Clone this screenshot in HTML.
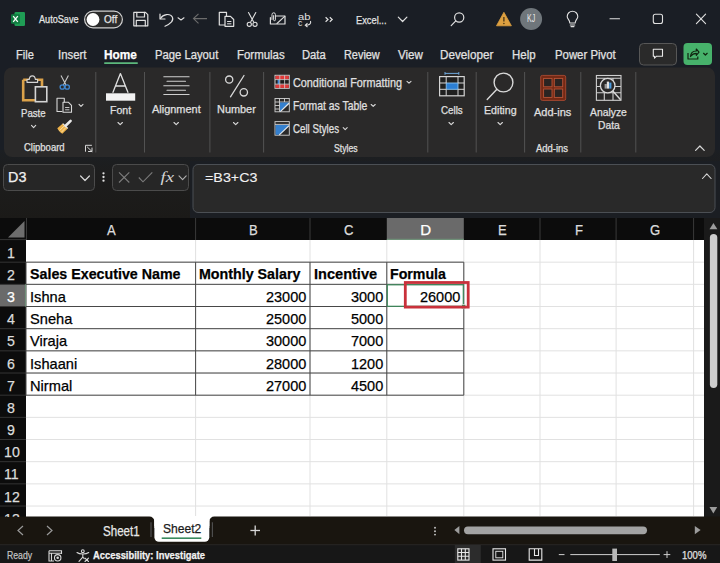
<!DOCTYPE html>
<html><head><meta charset="utf-8">
<style>
html,body{margin:0;padding:0;width:720px;height:563px;overflow:hidden;background:#1a1e25;}
body{position:relative;font-family:"Liberation Sans",sans-serif;}
svg.bg{position:absolute;left:0;top:0;width:720px;height:563px;}
.t{-webkit-text-stroke:0.25px currentColor;position:absolute;white-space:pre;line-height:1;transform-origin:0 0;font-family:"Liberation Sans",sans-serif;}
</style></head><body>
<svg class="bg" width="720" height="563" viewBox="0 0 720 563">
<!-- app bg -->
<defs><linearGradient id="fg" x1="0" y1="0" x2="0" y2="1"><stop offset="0" stop-color="#1c1f23"/><stop offset="0.35" stop-color="#1d1d1d"/><stop offset="1" stop-color="#1b1a18"/></linearGradient></defs>
<rect x="0" y="0" width="720" height="563" fill="#1a1e25"/>
<rect x="0" y="150" width="720" height="68" fill="url(#fg)"/>
<!-- ribbon -->
<rect x="4" y="67.5" width="711" height="89.5" rx="8" fill="#2a2929"/>
<!-- formula area -->
<rect x="3.5" y="164.5" width="91" height="26" rx="4" fill="#262626" stroke="#4b4b4b" stroke-width="1"/>
<g fill="#e0e0e0"><circle cx="103.5" cy="173.3" r="1.15"/><circle cx="103.5" cy="177" r="1.15"/><circle cx="103.5" cy="180.7" r="1.15"/></g>
<rect x="112.5" y="164.5" width="76" height="26" rx="4" fill="#262626" stroke="#4b4b4b" stroke-width="1"/>
<rect x="190" y="161" width="530" height="57" fill="#1b1e23"/>
<rect x="193" y="164.5" width="522" height="48" rx="5" fill="#292929" stroke="#4b4f54" stroke-width="1"/>
<!-- headers -->
<rect x="0" y="218" width="704" height="22" fill="#0c0c0c"/>
<rect x="0" y="240" width="26" height="277" fill="#0c0c0c"/>
<polygon points="8,237.5 24.5,237.5 24.5,221" fill="#6e6e6e"/>
<rect x="386.8" y="218" width="77" height="22" fill="#6a6a6a"/>
<rect x="0" y="284.3" width="26" height="22.2" fill="#6a6a6a"/>
<g stroke="#3a3a3a" stroke-width="1">
<line x1="26.5" y1="218" x2="26.5" y2="240"/>
<line x1="195.6" y1="218" x2="195.6" y2="240"/>
<line x1="310" y1="218" x2="310" y2="240"/>
<line x1="540" y1="218" x2="540" y2="240"/>
<line x1="616.1" y1="218" x2="616.1" y2="240"/>
<line x1="693.6" y1="218" x2="693.6" y2="240"/>
</g>
<!-- grid -->
<rect x="26" y="240" width="678" height="277" fill="#ffffff"/>
<g stroke="#e1e1e1" stroke-width="1">
<line x1="195.6" y1="240" x2="195.6" y2="517"/>
<line x1="310" y1="240" x2="310" y2="517"/>
<line x1="386.8" y1="240" x2="386.8" y2="517"/>
<line x1="463.8" y1="240" x2="463.8" y2="517"/>
<line x1="540" y1="240" x2="540" y2="517"/>
<line x1="616.1" y1="240" x2="616.1" y2="517"/>
<line x1="693.6" y1="240" x2="693.6" y2="517"/>
<line x1="26" y1="262.17" x2="704" y2="262.17"/>
<line x1="26" y1="284.34" x2="704" y2="284.34"/>
<line x1="26" y1="306.51" x2="704" y2="306.51"/>
<line x1="26" y1="328.68" x2="704" y2="328.68"/>
<line x1="26" y1="350.85" x2="704" y2="350.85"/>
<line x1="26" y1="373.02" x2="704" y2="373.02"/>
<line x1="26" y1="395.19" x2="704" y2="395.19"/>
<line x1="26" y1="417.36" x2="704" y2="417.36"/>
<line x1="26" y1="439.53" x2="704" y2="439.53"/>
<line x1="26" y1="461.70" x2="704" y2="461.70"/>
<line x1="26" y1="483.87" x2="704" y2="483.87"/>
<line x1="26" y1="506.04" x2="704" y2="506.04"/>
<line x1="0" y1="262.17" x2="26" y2="262.17" stroke="#343434"/>
<line x1="0" y1="284.34" x2="26" y2="284.34" stroke="#343434"/>
<line x1="0" y1="306.51" x2="26" y2="306.51" stroke="#343434"/>
<line x1="0" y1="328.68" x2="26" y2="328.68" stroke="#343434"/>
<line x1="0" y1="350.85" x2="26" y2="350.85" stroke="#343434"/>
<line x1="0" y1="373.02" x2="26" y2="373.02" stroke="#343434"/>
<line x1="0" y1="395.19" x2="26" y2="395.19" stroke="#343434"/>
<line x1="0" y1="417.36" x2="26" y2="417.36" stroke="#343434"/>
<line x1="0" y1="439.53" x2="26" y2="439.53" stroke="#343434"/>
<line x1="0" y1="461.70" x2="26" y2="461.70" stroke="#343434"/>
<line x1="0" y1="483.87" x2="26" y2="483.87" stroke="#343434"/>
<line x1="0" y1="506.04" x2="26" y2="506.04" stroke="#343434"/>
<line x1="0" y1="239.6" x2="26" y2="239.6" stroke="#343434"/>
</g>
<!-- table borders -->
<g stroke="#474747" stroke-width="1" fill="none">
<line x1="26" y1="262.17" x2="26" y2="395.19"/>
<line x1="195.6" y1="262.17" x2="195.6" y2="395.19"/>
<line x1="310" y1="262.17" x2="310" y2="395.19"/>
<line x1="386.8" y1="262.17" x2="386.8" y2="395.19"/>
<line x1="463.8" y1="262.17" x2="463.8" y2="395.19"/>
<line x1="26" y1="262.17" x2="463.8" y2="262.17"/>
<line x1="26" y1="284.34" x2="463.8" y2="284.34"/>
<line x1="26" y1="306.51" x2="463.8" y2="306.51"/>
<line x1="26" y1="328.68" x2="463.8" y2="328.68"/>
<line x1="26" y1="350.85" x2="463.8" y2="350.85"/>
<line x1="26" y1="373.02" x2="463.8" y2="373.02"/>
<line x1="26" y1="395.19" x2="463.8" y2="395.19"/>
</g>
<!-- selection -->
<rect x="387.3" y="284.8" width="76" height="21.5" fill="none" stroke="#3f8a5c" stroke-width="1.2"/>
<rect x="461.3" y="304.3" width="4.5" height="4.5" fill="#3f8a5c" stroke="#fff" stroke-width="0.6"/>
<line x1="386.8" y1="239.4" x2="463.8" y2="239.4" stroke="#6f9078" stroke-width="1.1"/>
<line x1="25.5" y1="284.3" x2="25.5" y2="306.5" stroke="#6f9078" stroke-width="1.1"/>
<rect x="405.3" y="282.5" width="62.9" height="24.6" fill="none" stroke="#c9313b" stroke-width="2.8"/>
<!-- v scrollbar -->
<rect x="704" y="218" width="16" height="299" fill="#1a1a1a"/>
<polygon points="709.5,229.3 717.4,229.3 713.45,222.9" fill="#9c9c9c"/>
<rect x="709.9" y="233.9" width="7.4" height="154" rx="3.7" fill="#cdcdcd"/>
<polygon points="709.5,507 717.2,507 713.35,513.6" fill="#9c9c9c"/>
<!-- tab bar -->
<rect x="26" y="516" width="678" height="12" fill="#ffffff"/>
<path d="M0,516.5 H149.4 A5,5 0 0 1 154.4,521.5 V544.5 H0 Z" fill="#19150f"/>
<path d="M214.3,516.5 H720 V544.5 H209.3 V521.5 A5,5 0 0 1 214.3,516.5 Z" fill="#19150f"/>
<rect x="150" y="535" width="64" height="9.6" fill="#19150f"/>
<rect x="154.4" y="516" width="54.9" height="25.8" rx="4.5" fill="#ffffff"/>
<rect x="154.4" y="516" width="54.9" height="10" fill="#ffffff"/>
<rect x="161.7" y="537.4" width="39.6" height="1.6" fill="#3a8a5e"/>
<g stroke="#4d4d4d" stroke-width="1.2"><line x1="151" y1="522.3" x2="151" y2="537"/><line x1="212.4" y1="522.3" x2="212.4" y2="537"/></g>
<g stroke="#9a9a9a" stroke-width="1.2" fill="none"><polyline points="23,526 18,530.5 23,535"/><polyline points="47,526 52,530.5 47,535"/></g>
<g stroke="#d8d8d8" stroke-width="1.3"><line x1="250.4" y1="530.5" x2="260" y2="530.5"/><line x1="255.2" y1="525.5" x2="255.2" y2="535.5"/></g>
<g fill="#c8c8c8"><circle cx="435" cy="527.8" r="0.95"/><circle cx="435" cy="531.2" r="0.95"/><circle cx="435" cy="534.6" r="0.95"/></g>
<polygon points="459.4,526 459.4,534.2 454.4,530.1" fill="#9c9c9c"/>
<rect x="464" y="526.4" width="183" height="7.8" rx="3.9" fill="#a3a3a3"/>
<polygon points="694.8,526 694.8,534.2 700.6,530.1" fill="#9c9c9c"/>
<!-- status bar -->
<rect x="0" y="544.4" width="720" height="18.6" fill="#171717"/>
<rect x="0" y="544.2" width="720" height="1" fill="#282624"/>
<rect x="454.8" y="545" width="26" height="18" fill="#2c2c2c"/>
<!-- ===== title bar icons ===== -->
<g>
<rect x="14.5" y="12" width="10.5" height="14" rx="1.2" fill="#1f9d55"/>
<rect x="11" y="14.3" width="9" height="9.5" rx="1" fill="#107c41"/>
<path d="M13.2,16.2 L17.8,21.9 M17.8,16.2 L13.2,21.9" stroke="#fff" stroke-width="1.3"/>
</g>
<rect x="84.6" y="11.1" width="37.8" height="16.8" rx="8.4" fill="#2b2b2b" stroke="#cfcfcf" stroke-width="1.2"/>
<circle cx="93" cy="19.5" r="6.4" fill="#ffffff"/>
<g fill="none" stroke="#e0e0e0" stroke-width="1.2" stroke-linejoin="round" stroke-linecap="round">
<!-- save -->
<path d="M133.8,12.4 H145.5 L147.8,14.7 V25.8 H133.8 Z"/>
<path d="M136.8,12.4 V17 H144.5 V12.4"/>
<path d="M136.3,25.8 V20.4 H145.3 V25.8"/>
<!-- undo -->
<path d="M160,14 V19 H165"/>
<path d="M160.5,18.5 C163,14 170,13 172.3,17 C174,20.5 171,23.5 165,26.2"/>
<polyline points="178,17.8 181,20 184,17.8" stroke-width="1.1"/>
<!-- copy -->
<path d="M224.5,25 H219.3 V12.3 H226.5 V16"/>
<path d="M225,16.3 H230.5 L233.7,19.5 V26.3 H225 Z"/>
<path d="M227.5,21.5 H231 M227.5,23.8 H231" stroke-width="1"/>
<!-- scissors -->
<path d="M248.5,12.5 L253.5,21.8 M255.8,12.5 L250.8,21.8" stroke-width="1.1"/>
<circle cx="249.3" cy="24.3" r="2.1" stroke-width="1.1"/>
<circle cx="255" cy="24.3" r="2.1" stroke-width="1.1"/>
<!-- attach mail -->
<path d="M275.5,16 H285 V24 H270.4 V17.5"/>
<path d="M277,23.5 L284.7,16.3" stroke-width="1.1"/>
<path d="M272,19.5 V14.5 A1.7,1.7 0 0 1 275.4,14.5 V19.8 A0.9,0.9 0 0 1 273.6,19.8 V15.6" stroke-width="1"/>
<!-- chevron title -->
<polyline points="398.3,17.2 402.6,21.5 406.9,17.2"/>
<!-- search -->
<circle cx="459.2" cy="17.5" r="4.6"/>
<path d="M455.8,20.9 L451.2,25.6"/>
<!-- bulb -->
<path d="M569.8,23 C569.8,20 567.2,19 567.2,16.5 A5.3,5.3 0 0 1 577.8,16.5 C577.8,19 575.2,20 575.2,23 Z" stroke-width="1.1"/>
<path d="M570.3,25 H574.7 M571,26.6 H574" stroke-width="1.1"/>
<!-- min max close -->
<path d="M610,18.8 H619.5" stroke-width="1.1"/>
<rect x="653.3" y="14.3" width="9.2" height="9.2" rx="2" stroke-width="1.1"/>
<path d="M696.4,14.2 L705.6,23.6 M705.6,14.2 L696.4,23.6" stroke-width="1.1"/>
</g>
<!-- abc -->
<text x="298" y="19.6" font-family="Liberation Sans" font-size="8.6" fill="#e0e0e0" textLength="12.5" lengthAdjust="spacingAndGlyphs">ab</text>
<text x="298" y="26.3" font-family="Liberation Sans" font-size="8.6" fill="#e0e0e0">c</text>
<path d="M310.5,21 C311.5,24 309,25.2 305.5,25.2 M307.5,23.2 L305.3,25.2 L307.5,27" fill="none" stroke="#e0e0e0" stroke-width="1.1"/>
<!-- chevrons >> -->
<g fill="none" stroke="#e0e0e0" stroke-width="1.2"><polyline points="325.6,17.3 328,19.5 325.6,21.7"/><polyline points="329.8,17.3 332.2,19.5 329.8,21.7"/></g>
<!-- back arrow dim -->
<path d="M193.5,18.6 H207 M198.5,13.8 L193.5,18.6 L198.5,23.4" fill="none" stroke="#6c6c6c" stroke-width="1.1"/>
<!-- warning -->
<path d="M503.9,12.3 L511.4,25.8 H496.5 Z" fill="#dda040" stroke="#dda040" stroke-width="0.8" stroke-linejoin="round"/>
<path d="M503.9,17 V21.6" stroke="#3a2a10" stroke-width="1.2"/>
<circle cx="503.9" cy="23.5" r="0.7" fill="#3a2a10"/>
<!-- avatar -->
<circle cx="531.1" cy="19" r="11" fill="#6f767b"/>
<!-- comment / share -->
<rect x="639.5" y="43.5" width="37" height="21.5" rx="4" fill="#2a2a2a" stroke="#575757" stroke-width="1"/>
<path d="M653.3,49.2 H662.5 V56.2 H656.5 L654.5,58.2 V56.2 H653.3 Z" fill="none" stroke="#e8e8e8" stroke-width="1.1" stroke-linejoin="round"/>
<rect x="683.5" y="43" width="28.5" height="22" rx="4" fill="#47b26b"/>
<g fill="none" stroke="#10240f" stroke-width="1.2" stroke-linejoin="round">
<path d="M688,53 V59 H697.8 V56.5"/>
<path d="M690.5,56.5 C690.8,52.5 693,51 696.3,51 V49 L699,52.2 L696.3,55.3 V53.4 C694,53.4 692,54.5 690.5,56.5 Z"/>
<polyline points="703.3,53 705.4,55 707.5,53"/>
</g>
<!-- Home underline -->
<rect x="104" y="62.2" width="34" height="1.8" rx="0.9" fill="#5cb87c"/>

<!-- ===== ribbon ===== -->
<g stroke="#525252" stroke-width="1">
<line x1="95.8" y1="72" x2="95.8" y2="152.5"/>
<line x1="144.5" y1="72" x2="144.5" y2="152.5"/>
<line x1="209.9" y1="72" x2="209.9" y2="152.5"/>
<line x1="263.6" y1="72" x2="263.6" y2="152.5"/>
<line x1="427.8" y1="72" x2="427.8" y2="152.5"/>
<line x1="476.2" y1="72" x2="476.2" y2="152.5"/>
<line x1="524.6" y1="72" x2="524.6" y2="152.5"/>
<line x1="580.8" y1="72" x2="580.8" y2="152.5"/>
<line x1="635.8" y1="72" x2="635.8" y2="152.5"/>
</g>
<!-- paste -->
<path d="M23.2,79.8 H42 V87 M23.2,79.8 V100.2 H35" fill="none" stroke="#dba24a" stroke-width="2.6"/>
<path d="M27,82.3 V79.5 H29.2 C29.5,76.5 30.8,75.8 32.3,75.8 C33.8,75.8 35.1,76.5 35.4,79.5 H37.6 V82.3 Z" fill="#2a2929" stroke="#d4d4d4" stroke-width="1.2" stroke-linejoin="round"/>
<rect x="35.4" y="86.8" width="11.4" height="14.9" fill="#2a2929" stroke="#d4d4d4" stroke-width="1.6"/>
<g fill="none" stroke="#d8d8d8" stroke-width="1.1" stroke-linecap="round" stroke-linejoin="round">
<polyline points="31.5,125.4 33.6,127.6 35.7,125.4"/>
<polyline points="79,104.4 81,106.4 83,104.4"/>
<polyline points="118,122.5 120.2,124.7 122.4,122.5"/>
<polyline points="174,122.5 176.2,124.7 178.4,122.5"/>
<polyline points="233.5,122.5 235.7,124.7 237.9,122.5"/>
<polyline points="449,122.5 451.2,124.7 453.4,122.5"/>
<polyline points="498,122.5 500.2,124.7 502.4,122.5"/>
<polyline points="407,81.3 409,83.2 411,81.3"/>
<polyline points="371.2,104.5 373.2,106.4 375.2,104.5"/>
<polyline points="343.2,127.7 345.2,129.6 347.2,127.7"/>
<polyline points="695.6,150.3 699.9,146 704.2,150.3" stroke-width="1.2"/>
<!-- copy ribbon -->
<path d="M62,111.5 H57 V98.3 H64.3 V102"/>
<path d="M63,102.3 H68.5 L71.5,105.3 V112.2 H63 Z"/>
<path d="M65.5,107.5 H69 M65.5,109.8 H69" stroke-width="0.9"/>
<!-- launcher -->
<path d="M85.5,151.3 V145.3 H91.5" stroke-width="1"/>
<path d="M87.5,147.2 L92,151.5 M92,148 V151.5 H88.5" stroke-width="1"/>
<!-- align lines -->
<path d="M163.8,76.7 H189.1 M167,81.2 H185.5 M163.8,85.8 H189.1 M167,90.3 H185.5 M163.8,94.5 H189.1" stroke="#cfcfcf" stroke-width="1.1"/>
<!-- percent -->
<circle cx="229.2" cy="79.6" r="3.6" stroke-width="1.3"/>
<circle cx="243.8" cy="92.3" r="3.7" stroke-width="1.3"/>
<path d="M230.5,96.8 L244,75.5" stroke-width="1.3"/>
<!-- font A -->
<path d="M113,92.3 L120.4,73.6 L127.9,92.3 M115.6,86 H125.3" stroke="#e0e0e0" stroke-width="1.3"/>
<!-- editing search -->
<circle cx="503.5" cy="82.5" r="9.4" stroke-width="1.4"/>
<path d="M496.9,89.2 L487.2,99.6" stroke-width="1.4"/>
<!-- collapse done above -->
<!-- formula bar -->
<polyline points="80.6,176 85,180.5 89.4,176" stroke-width="1.2"/>
<polyline points="179,175.8 182.6,179.6 186.2,175.8" stroke="#b0b0b0"/>
<polyline points="702.5,178.5 706.8,173.8 711.1,178.5" stroke-width="1.1"/>
</g>
<rect x="106" y="93.3" width="29.2" height="7.4" fill="#f2f2f2"/>
<!-- scissors blue -->
<path d="M61,75.6 L66,85 M68.4,75.6 L63.4,85" fill="none" stroke="#c8c8c8" stroke-width="1.1"/>
<g fill="none" stroke="#3f86d0" stroke-width="1.3">
<circle cx="62.3" cy="87" r="2.2"/><circle cx="67.2" cy="87" r="2.2"/>
</g>
<!-- brush -->
<path d="M57.3,128.2 L62.8,123.6 L67.8,128.4 L62.3,133.8 C60.5,132.5 58.5,130.5 57.3,128.2 Z" fill="#eeb24a"/>
<path d="M59.5,130.6 L64.6,125.6 M61.3,132.3 L66.2,127.3" stroke="#fff0c8" stroke-width="0.7"/>
<path d="M62.8,123.6 L67.8,128.4" stroke="#e8e8e8" stroke-width="1.2"/>
<path d="M65.6,125.8 L70.6,120.9" stroke="#e8e8e8" stroke-width="2.6" stroke-linecap="round"/>
<!-- conditional formatting icon -->
<g>
<rect x="275" y="75.3" width="14.3" height="13" fill="#1e1e1e" stroke="#d0d0d0" stroke-width="1"/>
<rect x="275.5" y="75.8" width="13.3" height="3.6" fill="#e03a3a"/>
<rect x="275.5" y="84.3" width="13.3" height="3.6" fill="#e03a3a"/>
<rect x="277.6" y="79.6" width="2" height="4.6" fill="#3f86d8"/>
<path d="M275,79.6 H289.3 M275,84.1 H289.3 M279.8,75.3 V88.3 M284.6,75.3 V88.3" stroke="#d0d0d0" stroke-width="0.8"/>
</g>
<g fill="none" stroke="#d0d0d0" stroke-width="0.9">
<rect x="275" y="98.5" width="14.3" height="13.3"/>
<path d="M275,102 H289.3 M275,105.5 H280 M275,109 H279 M279.5,98.5 V111.8 M284.5,98.5 V102"/>
</g>
<path d="M280,102.5 H288.8 V104 L280.5,111.3 H280 Z" fill="#3480cf"/>
<path d="M280.3,111.6 L289,103.2" stroke="#e8e8e8" stroke-width="1.2"/>
<g fill="none" stroke="#d0d0d0" stroke-width="0.9">
<rect x="275" y="121.6" width="14.3" height="13.6"/>
<path d="M275,124.4 H289.3"/>
</g>
<path d="M275.6,124.9 H288.8 V126.5 L279.5,134.7 H275.6 Z" fill="#3480cf"/>
<path d="M279.3,134.9 L289,125.6" stroke="#e8e8e8" stroke-width="1.2"/>
<!-- cells icon -->
<g>
<path d="M445,73.4 H458.8 M445,72 V74.8 M458.8,72 V74.8" stroke="#6fa8dc" stroke-width="1"/>
<rect x="439.6" y="76.6" width="24.6" height="19.2" fill="#202020" stroke="#d4d4d4" stroke-width="1.2"/>
<rect x="446.2" y="83" width="11.8" height="6.3" fill="#2c7fd4" stroke="#8cc4f0" stroke-width="0.9"/>
<path d="M439.6,83 H446.2 M458,83 H464.2 M439.6,89.3 H446.2 M458,89.3 H464.2 M446.2,76.6 V83 M446.2,89.3 V95.8 M458,76.6 V83 M458,89.3 V95.8" stroke="#d4d4d4" stroke-width="1"/>
</g>
<!-- add-ins -->
<rect x="540.7" y="75.4" width="25" height="25" rx="1.6" fill="#742914" stroke="#a84a32" stroke-width="0.9"/>
<g fill="#2a2422" stroke="#b85538" stroke-width="0.9">
<rect x="543.6" y="78.4" width="8.4" height="8.4"/><rect x="554.3" y="78.4" width="8.4" height="8.4"/>
<rect x="543.6" y="89" width="8.4" height="8.4"/><rect x="554.3" y="89" width="8.4" height="8.4"/>
</g>
<!-- analyze data -->
<g fill="none" stroke="#cfcfcf" stroke-width="1.1">
<rect x="596.4" y="75.5" width="24.6" height="24.8"/>
<path d="M596.4,78.3 H621 M596.4,86.5 H621 M596.4,92.8 H621 M604.3,78.3 V100.3 M613,78.3 V100.3"/>
</g>
<circle cx="607.7" cy="85.6" r="7.3" fill="#2a2929" stroke="#d8d8d8" stroke-width="1.3"/>
<path d="M612.8,91 L620.6,99.8" stroke="#d8d8d8" stroke-width="1.4"/>
<rect x="604.6" y="84" width="2.2" height="4.6" fill="#9a9a9a"/>
<rect x="606.8" y="81.6" width="2.3" height="7" fill="#e0e0e0"/>
<rect x="609.2" y="82.6" width="2.2" height="6" fill="#4a9be0"/>
<!-- formula X check fx -->
<path d="M119,172.3 L129.3,182.5 M129.3,172.3 L119,182.5" stroke="#7c7c7c" stroke-width="1.1"/>
<path d="M138.8,177.5 L143,181.8 L152.3,172.3" fill="none" stroke="#7c7c7c" stroke-width="1.1"/>
<text x="160.5" y="182" font-family="Liberation Serif" font-style="italic" font-size="15" fill="#d4d4d4" textLength="13.5" lengthAdjust="spacingAndGlyphs">fx</text>
<!-- status bar icons -->
<g fill="none" stroke="#d8d8d8" stroke-width="1.1">
<path d="M49,550.8 H61.5 V554 M49,550.8 V561 H54 M49,553.2 H61.5 M51.5,553.2 V561"/>
<circle cx="57.7" cy="557.8" r="3.2"/>
</g>
<circle cx="57.7" cy="557.8" r="1.3" fill="#d8d8d8"/>
<g fill="none" stroke="#d8d8d8" stroke-width="1.1" stroke-linecap="round">
<circle cx="82.8" cy="551.2" r="1.4"/>
<path d="M77,552.5 C79.5,554.5 86,554.5 88.7,552.5 M82.8,554 V557 L79,561.3 M82.8,557 L84.2,558.7"/>
<path d="M85,558.2 L88.5,561.5 M88.5,558.2 L85,561.5"/>
</g>
<g fill="none" stroke="#e8e8e8" stroke-width="1.1">
<rect x="457.8" y="548.8" width="11.2" height="11.3"/>
<path d="M461.5,548.8 V560.1 M465.3,548.8 V560.1 M457.8,552.5 H469 M457.8,556.3 H469"/>
<rect x="493" y="548.8" width="12.5" height="11.3"/>
<rect x="495.8" y="551.3" width="7" height="6.5" stroke-width="0.9"/>
<path d="M529.2,560.1 V548.8 H541.8 V560.1 Z M534.5,548.8 V555.5 H538.5 V548.8"/>
</g>
<g stroke="#cfcfcf" stroke-width="1"><path d="M558.8,554.6 H564.5 M570.3,554.6 H659.8 M663.6,554.6 H670.3 M667,551.2 V558"/></g>
<rect x="612.3" y="548.6" width="4.7" height="12.4" fill="#b8b8b8"/>

</svg>

<div class="t" style="left:38.75px;top:13.65px;font-size:11.05px;color:#e4e4e4;transform:scaleX(0.8247);">AutoSave</div>
<div class="t" style="left:103.75px;top:14.74px;font-size:10.47px;color:#e4e4e4;transform:scaleX(0.9606);">Off</div>
<div class="t" style="left:355.50px;top:13.75px;font-size:11.63px;color:#e4e4e4;transform:scaleX(0.7999);">Excel...</div>
<div class="t" style="left:526.80px;top:14.11px;font-size:10.03px;color:#e8e8e8;transform:scaleX(0.7006);-webkit-text-stroke:0;">KJ</div>
<div class="t" style="left:15.80px;top:48.86px;font-size:12.21px;color:#e2e2e2;transform:scaleX(0.9050);">File</div>
<div class="t" style="left:57.60px;top:48.86px;font-size:12.21px;color:#e2e2e2;transform:scaleX(0.9333);">Insert</div>
<div class="t" style="left:155.00px;top:48.86px;font-size:12.21px;color:#e2e2e2;transform:scaleX(0.9232);">Page Layout</div>
<div class="t" style="left:237.30px;top:48.86px;font-size:12.21px;color:#e2e2e2;transform:scaleX(0.9373);">Formulas</div>
<div class="t" style="left:302.30px;top:48.86px;font-size:12.21px;color:#e2e2e2;transform:scaleX(0.9187);">Data</div>
<div class="t" style="left:343.90px;top:48.86px;font-size:12.21px;color:#e2e2e2;transform:scaleX(0.8934);">Review</div>
<div class="t" style="left:397.60px;top:48.86px;font-size:12.21px;color:#e2e2e2;transform:scaleX(0.9477);">View</div>
<div class="t" style="left:440.30px;top:48.86px;font-size:12.21px;color:#e2e2e2;transform:scaleX(0.9578);">Developer</div>
<div class="t" style="left:512.00px;top:48.86px;font-size:12.21px;color:#e2e2e2;transform:scaleX(0.9397);">Help</div>
<div class="t" style="left:554.70px;top:48.86px;font-size:12.21px;color:#e2e2e2;transform:scaleX(0.9319);">Power Pivot</div>
<div class="t" style="left:104.40px;top:48.86px;font-size:12.21px;color:#ffffff;font-weight:700;transform:scaleX(0.9700);">Home</div>
<div class="t" style="left:20.60px;top:107.85px;font-size:11.05px;color:#e0e0e0;transform:scaleX(0.8709);">Paste</div>
<div class="t" style="left:24.00px;top:143.34px;font-size:10.47px;color:#e0e0e0;transform:scaleX(0.9064);">Clipboard</div>
<div class="t" style="left:109.90px;top:104.55px;font-size:11.05px;color:#e0e0e0;transform:scaleX(0.9546);">Font</div>
<div class="t" style="left:152.30px;top:104.35px;font-size:11.05px;color:#e0e0e0;transform:scaleX(0.9914);">Alignment</div>
<div class="t" style="left:216.70px;top:104.35px;font-size:11.05px;color:#e0e0e0;transform:scaleX(0.9875);">Number</div>
<div class="t" style="left:293.00px;top:77.09px;font-size:12.06px;color:#e0e0e0;transform:scaleX(0.8989);">Conditional Formatting</div>
<div class="t" style="left:293.00px;top:100.39px;font-size:12.06px;color:#e0e0e0;transform:scaleX(0.8624);">Format as Table</div>
<div class="t" style="left:293.00px;top:123.49px;font-size:12.06px;color:#e0e0e0;transform:scaleX(0.8089);">Cell Styles</div>
<div class="t" style="left:333.70px;top:143.74px;font-size:10.47px;color:#e0e0e0;transform:scaleX(0.8282);">Styles</div>
<div class="t" style="left:440.80px;top:104.75px;font-size:11.05px;color:#e0e0e0;transform:scaleX(0.8837);">Cells</div>
<div class="t" style="left:483.75px;top:104.75px;font-size:11.05px;color:#e0e0e0;transform:scaleX(0.9636);">Editing</div>
<div class="t" style="left:533.80px;top:105.95px;font-size:11.63px;color:#e0e0e0;transform:scaleX(0.9460);">Add-ins</div>
<div class="t" style="left:536.20px;top:143.99px;font-size:10.17px;color:#e0e0e0;transform:scaleX(0.9304);">Add-ins</div>
<div class="t" style="left:590.10px;top:106.45px;font-size:11.63px;color:#e0e0e0;transform:scaleX(0.8919);">Analyze</div>
<div class="t" style="left:597.60px;top:120.45px;font-size:11.05px;color:#e0e0e0;transform:scaleX(0.9297);">Data</div>
<div class="t" style="left:8.30px;top:170.32px;font-size:14.97px;color:#f0f0f0;transform:scaleX(0.9617);">D3</div>
<div class="t" style="left:204.50px;top:171.43px;font-size:13.66px;color:#f2f2f2;transform:scaleX(1.0473);-webkit-text-stroke:0.1px #f2f2f2;">=B3+C3</div>
<div class="t" style="left:106.93px;top:222.94px;font-size:14.24px;color:#dcdcdc;transform:scaleX(0.9200);">A</div>
<div class="t" style="left:248.93px;top:222.94px;font-size:14.24px;color:#dcdcdc;transform:scaleX(0.9200);">B</div>
<div class="t" style="left:344.17px;top:222.94px;font-size:14.24px;color:#dcdcdc;transform:scaleX(0.9200);">C</div>
<div class="t" style="left:420.34px;top:222.20px;font-size:15.12px;color:#ffffff;transform:scaleX(1.0000);">D</div>
<div class="t" style="left:498.03px;top:222.94px;font-size:14.24px;color:#dcdcdc;transform:scaleX(0.9200);">E</div>
<div class="t" style="left:574.55px;top:222.94px;font-size:14.24px;color:#dcdcdc;transform:scaleX(0.9200);">F</div>
<div class="t" style="left:650.25px;top:222.94px;font-size:14.24px;color:#dcdcdc;transform:scaleX(0.9200);">G</div>
<div style="position:absolute;left:0;top:0;width:720px;height:516.5px;overflow:hidden">
<div class="t" style="left:7.46px;top:244.75px;font-size:15.41px;color:#dcdcdc;transform:scaleX(0.9200);">1</div>
<div class="t" style="left:7.46px;top:266.92px;font-size:15.41px;color:#dcdcdc;transform:scaleX(0.9200);">2</div>
<div class="t" style="left:7.46px;top:289.09px;font-size:15.41px;color:#ffffff;transform:scaleX(0.9200);">3</div>
<div class="t" style="left:7.46px;top:311.26px;font-size:15.41px;color:#dcdcdc;transform:scaleX(0.9200);">4</div>
<div class="t" style="left:7.46px;top:333.43px;font-size:15.41px;color:#dcdcdc;transform:scaleX(0.9200);">5</div>
<div class="t" style="left:7.46px;top:355.60px;font-size:15.41px;color:#dcdcdc;transform:scaleX(0.9200);">6</div>
<div class="t" style="left:7.46px;top:377.77px;font-size:15.41px;color:#dcdcdc;transform:scaleX(0.9200);">7</div>
<div class="t" style="left:7.46px;top:399.94px;font-size:15.41px;color:#dcdcdc;transform:scaleX(0.9200);">8</div>
<div class="t" style="left:7.46px;top:422.11px;font-size:15.41px;color:#dcdcdc;transform:scaleX(0.9200);">9</div>
<div class="t" style="left:3.52px;top:444.28px;font-size:15.41px;color:#dcdcdc;transform:scaleX(0.9200);">10</div>
<div class="t" style="left:4.04px;top:466.45px;font-size:15.41px;color:#dcdcdc;transform:scaleX(0.9200);">11</div>
<div class="t" style="left:3.52px;top:488.62px;font-size:15.41px;color:#dcdcdc;transform:scaleX(0.9200);">12</div>
<div class="t" style="left:3.52px;top:510.79px;font-size:15.41px;color:#dcdcdc;transform:scaleX(0.9200);">13</div>
<div class="t" style="left:30.00px;top:266.45px;font-size:15.41px;color:#000000;font-weight:700;transform:scaleX(0.9249);">Sales Executive Name</div>
<div class="t" style="left:199.20px;top:266.45px;font-size:15.41px;color:#000000;font-weight:700;transform:scaleX(0.9253);">Monthly Salary</div>
<div class="t" style="left:313.60px;top:266.45px;font-size:15.41px;color:#000000;font-weight:700;transform:scaleX(0.9448);">Incentive</div>
<div class="t" style="left:390.40px;top:266.45px;font-size:15.41px;color:#000000;font-weight:700;transform:scaleX(0.9197);">Formula</div>
<div class="t" style="left:30.00px;top:289.09px;font-size:15.41px;color:#000000;transform:scaleX(0.9500);">Ishna</div>
<div class="t" style="left:266.42px;top:289.09px;font-size:15.41px;color:#000000;transform:scaleX(0.9400);">23000</div>
<div class="t" style="left:350.78px;top:289.09px;font-size:15.41px;color:#000000;transform:scaleX(0.9400);">3000</div>
<div class="t" style="left:30.00px;top:311.26px;font-size:15.41px;color:#000000;transform:scaleX(0.9500);">Sneha</div>
<div class="t" style="left:266.42px;top:311.26px;font-size:15.41px;color:#000000;transform:scaleX(0.9400);">25000</div>
<div class="t" style="left:350.78px;top:311.26px;font-size:15.41px;color:#000000;transform:scaleX(0.9400);">5000</div>
<div class="t" style="left:30.00px;top:333.43px;font-size:15.41px;color:#000000;transform:scaleX(0.9500);">Viraja</div>
<div class="t" style="left:266.42px;top:333.43px;font-size:15.41px;color:#000000;transform:scaleX(0.9400);">30000</div>
<div class="t" style="left:350.78px;top:333.43px;font-size:15.41px;color:#000000;transform:scaleX(0.9400);">7000</div>
<div class="t" style="left:30.00px;top:355.60px;font-size:15.41px;color:#000000;transform:scaleX(0.9500);">Ishaani</div>
<div class="t" style="left:266.42px;top:355.60px;font-size:15.41px;color:#000000;transform:scaleX(0.9400);">28000</div>
<div class="t" style="left:350.78px;top:355.60px;font-size:15.41px;color:#000000;transform:scaleX(0.9400);">1200</div>
<div class="t" style="left:30.00px;top:377.77px;font-size:15.41px;color:#000000;transform:scaleX(0.9500);">Nirmal</div>
<div class="t" style="left:266.42px;top:377.77px;font-size:15.41px;color:#000000;transform:scaleX(0.9400);">27000</div>
<div class="t" style="left:350.78px;top:377.77px;font-size:15.41px;color:#000000;transform:scaleX(0.9400);">4500</div>
<div class="t" style="left:420.02px;top:289.09px;font-size:15.41px;color:#000000;transform:scaleX(0.9400);">26000</div>
</div>
<div class="t" style="left:103.00px;top:524.89px;font-size:13.95px;color:#e8e8e8;transform:scaleX(0.8300);">Sheet1</div>
<div class="t" style="left:162.50px;top:522.13px;font-size:13.66px;color:#1a1a1a;transform:scaleX(0.8846);">Sheet2</div>
<div class="t" style="left:6.90px;top:550.99px;font-size:10.17px;color:#c0c0c0;transform:scaleX(0.8533);">Ready</div>
<div class="t" style="left:93.20px;top:550.64px;font-size:10.47px;color:#f2f2f2;font-weight:700;transform:scaleX(0.8957);">Accessibility: Investigate</div>
<div class="t" style="left:682.00px;top:550.64px;font-size:10.47px;color:#e0e0e0;transform:scaleX(0.9115);">100%</div>
</body></html>
